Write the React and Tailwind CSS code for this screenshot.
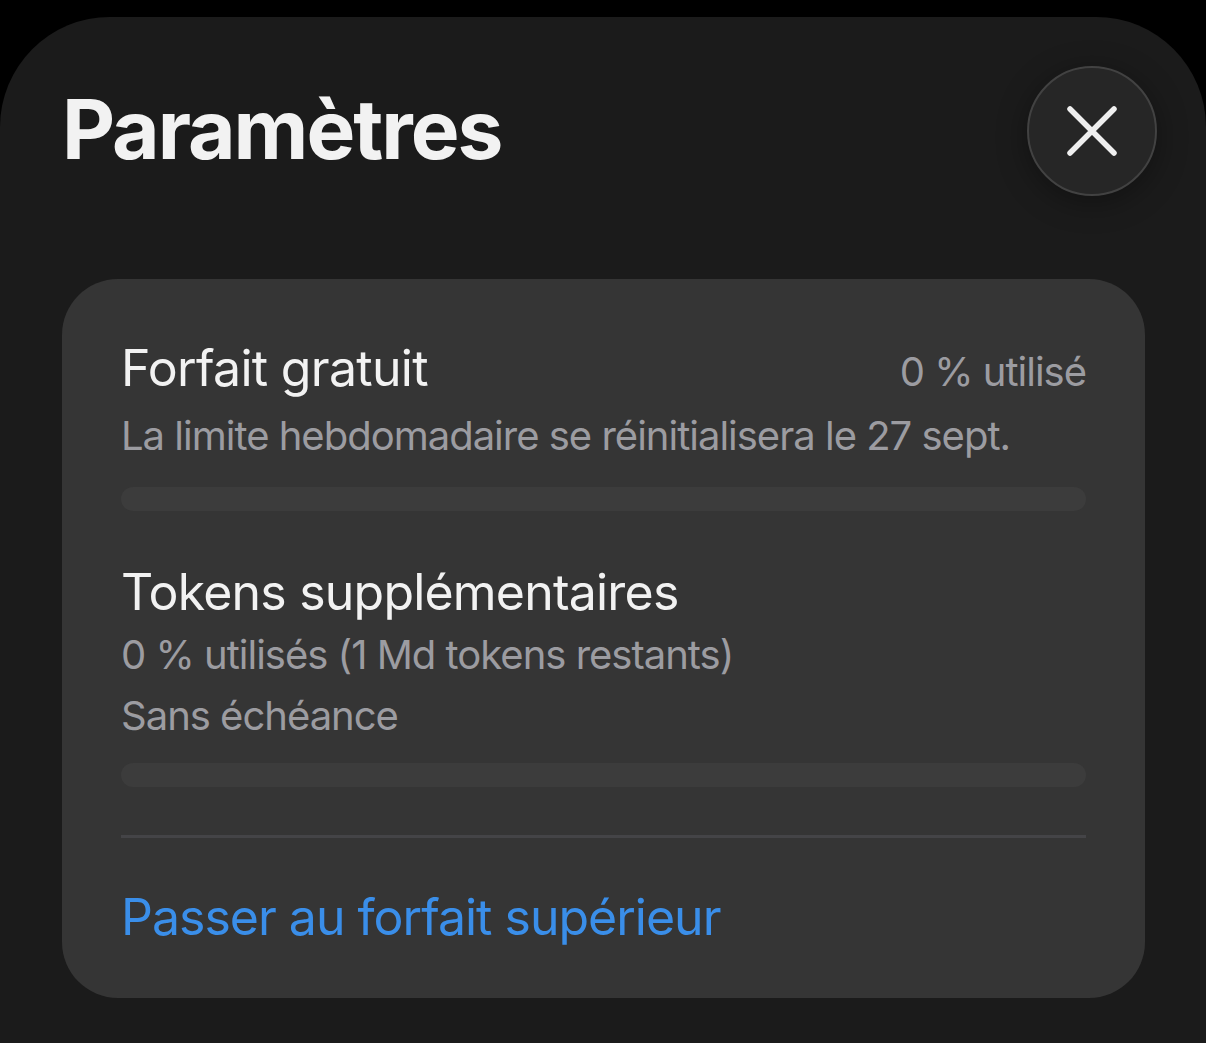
import React from 'react';

const font = { fontFamily: 'Inter, "Noto Sans", sans-serif' };

const CloseButton = () => (
  <button className="flex h-[130px] w-[130px] shrink-0 items-center justify-center rounded-full border-2 border-[#424242] bg-[#262626] shadow-[0_6px_30px_rgba(0,0,0,0.35)]">
    <svg width="50" height="50" viewBox="0 0 50 50" fill="none">
      <path d="M3 3 L47 47 M47 3 L3 47" stroke="#efefef" strokeWidth="5.5" strokeLinecap="round" />
    </svg>
  </button>
);

const Bar = ({ className = '' }) => (
  <div className={`h-[24px] w-full rounded-full bg-[#3c3c3c] ${className}`} />
);

export default function App() {
  return (
    <div className="min-h-[1043px] bg-black pt-[17px]" style={font}>
      <div className="min-h-[1026px] rounded-t-[110px] bg-[#1b1b1b] pl-[62px] pr-[49px]">
        {/* Header */}
        <div className="flex items-center justify-between pt-[49px]">
          <h1 className="-mt-[2px] text-[82px] font-bold leading-[130px] tracking-[-2px] text-[#f2f2f2]">
            Paramètres
          </h1>
          <CloseButton />
        </div>

        {/* Usage card */}
        <div className="mr-[12px] mt-[83px] rounded-[56px] bg-[#353535] px-[59px] pb-[51px] pt-[59px]">
          <div className="flex items-baseline justify-between">
            <span className="text-[50px] leading-[60px] tracking-[-0.7px] text-[#f2f2f2]">Forfait gratuit</span>
            <span className="text-[40px] leading-[60px] tracking-[-1px] text-[#9c9ca1]">0 % utilisé</span>
          </div>
          <p className="mt-[6px] text-[40px] leading-[56px] tracking-[-1px] text-[#9c9ca1]">
            La limite hebdomadaire se réinitialisera le 27 sept.
          </p>
          <Bar className="mt-[23px]" />

          <p className="mt-[51px] text-[50px] leading-[60px] tracking-[-0.8px] text-[#f2f2f2]">Tokens supplémentaires</p>
          <p className="mt-[5px] text-[40px] leading-[56px] tracking-[-1px] text-[#9c9ca1]">
            0 % utilisés (1 Md tokens restants)
          </p>
          <p className="mt-[5px] text-[40px] leading-[56px] tracking-[-1px] text-[#9c9ca1]">Sans échéance</p>
          <Bar className="mt-[19px]" />

          <div className="mt-[48px] h-[3px] bg-[#444447]" />

          <p className="mt-[49px] text-[50px] leading-[60px] tracking-[-1px] text-[#3a8ee9]">
            Passer au forfait supérieur
          </p>
        </div>
      </div>
    </div>
  );
}
